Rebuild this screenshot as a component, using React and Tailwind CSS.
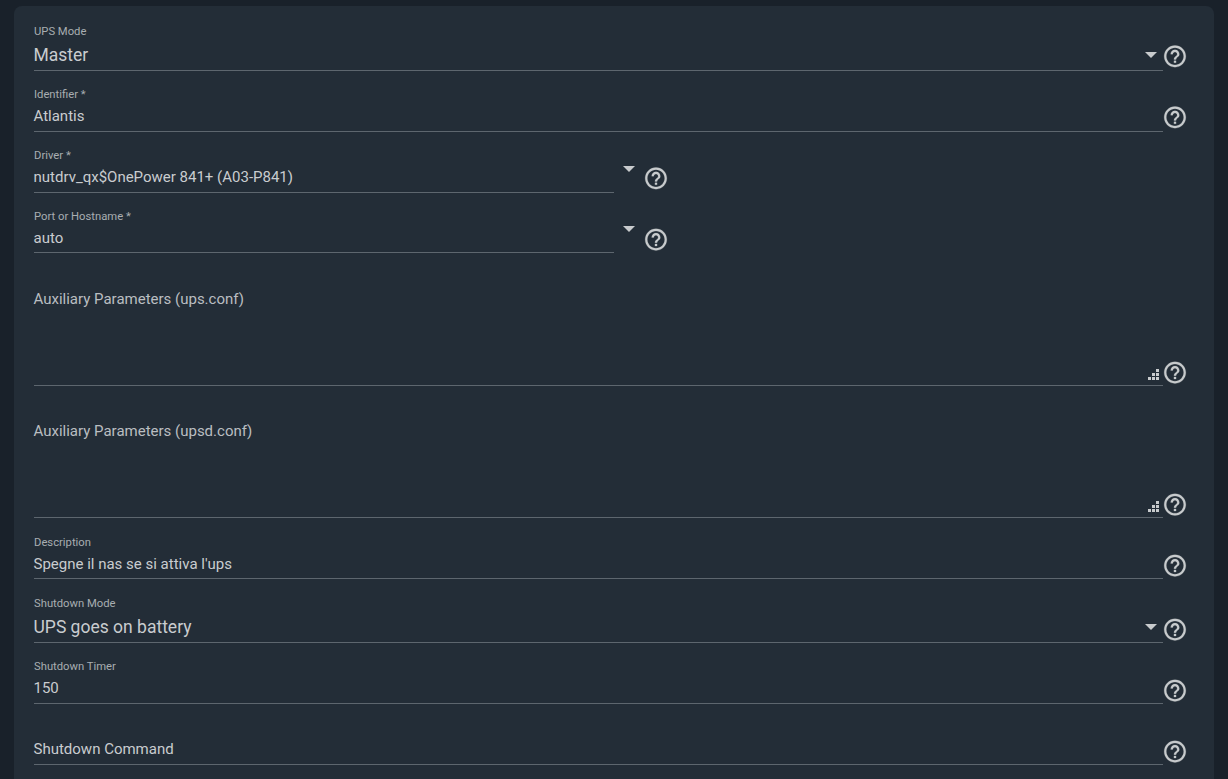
import React from 'react';

const HelpIcon = ({ raised }) => (
    <svg className={`w-[26px] h-[26px] shrink-0 -ml-px text-[#c8cbcd] ${raised ? 'mb-[2px] translate-y-[0.3px]' : 'mb-px translate-y-[0.6px]'}`} viewBox="0 0 24 24" fill="currentColor">
        <path d="M11 18h2v-2h-2v2zm1-16C6.48 2 2 6.48 2 12s4.48 10 10 10 10-4.48 10-10S17.52 2 12 2zm0 18c-4.41 0-8-3.59-8-8s3.59-8 8-8 8 3.59 8 8-3.59 8-8 8zm0-14c-2.21 0-4 1.79-4 4h2c0-1.1.9-2 2-2s2 .9 2 2c0 2-3 1.75-3 5h2c0-2.25 3-2.5 3-5 0-2.21-1.79-4-4-4z" stroke="currentColor" strokeWidth="0.2" />
    </svg>
);

const Arrow = () => (
    <div className="w-0 h-0 border-l-[6px] border-r-[6px] border-t-[6px] border-l-transparent border-r-transparent border-t-[#c8cbcd]" />
);

const Grip = () => (
    <svg className="absolute right-[4px] bottom-[5px] w-[11px] h-[11px] text-[#c8cbcd]" viewBox="0 0 11 11" fill="currentColor">
        <rect x="0" y="8" width="3" height="3" />
        <rect x="4" y="8" width="3" height="3" />
        <rect x="8" y="8" width="3" height="3" />
        <rect x="4" y="4" width="3" height="3" />
        <rect x="8" y="4" width="3" height="3" />
        <rect x="8" y="0" width="3" height="3" />
    </svg>
);

// regular input row, big = select text size, tight = text sits 1px lower
const Field = ({ label, value, big, tight, select, narrow, raised, height = 'h-[61px]' }) => (
    <div className={`flex items-end ${height}`}>
        <div className={`relative flex flex-col justify-end h-full border-b border-[#5d666e] ${narrow ? 'w-[580px]' : 'w-[1129px]'}`}>
            {label && <div className="mb-[4px] text-[11.25px] leading-[14px] text-[#a8adb1]">{label}</div>}
            {big ? (
                <div className="pb-[3px] -ml-[0.5px] text-[17.5px] leading-[24px] text-[#c9cccf] whitespace-nowrap">{value}</div>
            ) : (
                <div className={`-ml-[0.5px] text-[15px] leading-[20px] text-[#c9cccf] whitespace-nowrap ${tight ? 'pb-[4px]' : 'pb-[5px]'}`}>{value}</div>
            )}
            {select && !narrow && (
                <div className="absolute right-[6px] bottom-[12px]"><Arrow /></div>
            )}
        </div>
        {select && narrow && (
            <div className="w-[30px] flex justify-center pb-[21px]"><Arrow /></div>
        )}
        <HelpIcon raised={raised} />
    </div>
);

const AreaField = ({ label, height }) => (
    <div className={`flex items-end ${height}`}>
        <div className="relative flex flex-col justify-end w-[1129px] h-full pb-[76px] border-b border-[#5d666e]">
            <div className="-ml-[0.5px] text-[15px] leading-[20px] text-[#babec1]">{label}</div>
            <Grip />
        </div>
        <HelpIcon />
    </div>
);

const App = () => {
    return (
        <div className="h-[779px] overflow-hidden bg-[#19212a] pt-[6px] pl-[14px] font-['Roboto',sans-serif]">
            <div className="w-[1200px] h-[800px] rounded-t-[8px] bg-[#232d37] pt-[4px] pl-[20px]">
                <Field label="UPS Mode" value="Master" big select raised />
                <Field label="Identifier *" value="Atlantis" raised />
                <Field label="Driver *" value="nutdrv_qx$OnePower 841+ (A03-P841)" select narrow raised />
                <Field label="Port or Hostname *" value="auto" tight select narrow height="h-[60px]" />
                <AreaField label="Auxiliary Parameters (ups.conf)" height="h-[133px]" />
                <AreaField label="Auxiliary Parameters (upsd.conf)" height="h-[132px]" />
                <Field label="Description" value="Spegne il nas se si attiva l'ups" tight />
                <Field label="Shutdown Mode" value="UPS goes on battery" big select height="h-[64px]" />
                <Field label="Shutdown Timer" value="150" />
                <Field value="Shutdown Command" />
            </div>
        </div>
    );
};

export default App;
